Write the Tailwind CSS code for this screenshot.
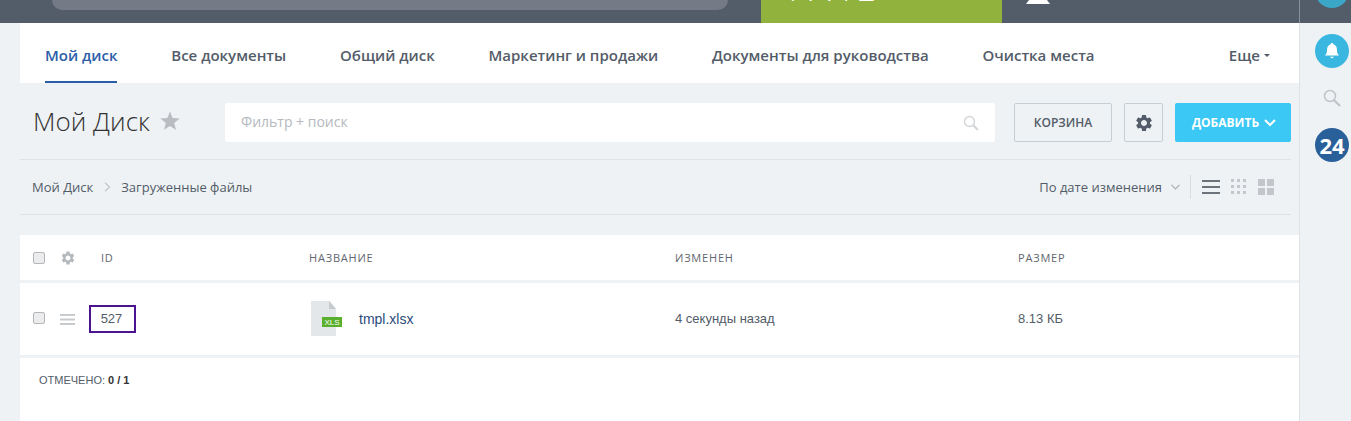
<!DOCTYPE html>
<html lang="en">
<head>
  <meta charset="UTF-8" />
  <title>Мой Диск</title>
  <script src="https://cdn.jsdelivr.net/npm/@tailwindcss/browser@4"></script>
</head>
<body class="h-[421px] overflow-hidden bg-[#eef2f4] font-['Open_Sans',sans-serif] text-[#535c69]">

  <!-- Top bar -->
  <header class="flex h-[23px] overflow-hidden bg-[#535c69]">
    <div class="ml-[52px] h-[10px] w-[676px] rounded-b-[12px] bg-[#747b86]"></div>
    <div class="ml-[33px] h-[23px] w-[241px] overflow-hidden bg-[#91b33d] pl-[22px]">
      <div class="-mt-[29px] text-[32px] leading-[36px] font-light tracking-[3px] text-white">17:12</div>
    </div>
    <svg class="ml-[24px]" width="24" height="5" viewBox="0 0 24 5"><path d="M3 0h18l3 4H0z" fill="#fff"/></svg>
    <div class="ml-[249px] h-[23px] w-[52px] border-l border-[#8a919b]">
      <div class="-mt-[9px] ml-[15px] h-[34px] w-[34px] -translate-y-[17px] rounded-full bg-[#3aa7c9]"></div>
    </div>
  </header>

  <div class="flex h-[398px]">
    <main class="w-[1299px] pl-[20px]">

      <!-- Tabs -->
      <nav class="flex h-[60px] items-center justify-between bg-white pt-[4px] pr-[29px] pl-[25px] text-[15px] font-semibold">
        <div class="flex h-full items-center gap-[53.8px]">
          <a class="flex h-full items-center border-b-2 border-[#2a5ea8] pt-[2px] text-[#2a5ea8]">Мой диск</a>
          <a>Все документы</a>
          <a>Общий диск</a>
          <a>Маркетинг и продажи</a>
          <a>Документы для руководства</a>
          <a>Очистка места</a>
        </div>
        <a class="flex items-center gap-[4px]">Еще <span class="mt-[1px] h-0 w-0 border-x-[3px] border-t-[3px] border-x-transparent border-t-[#535c69]"></span></a>
      </nav>

      <!-- Title, filter, buttons -->
      <div class="mr-[8px] flex h-[77px] items-start border-b border-[#dde2e5] pt-[20px] pl-[13px]">
        <h1 class="w-[127px] text-[26px] leading-[36px] font-light text-[#333]">Мой Диск</h1>
        <svg class="mt-[8px]" width="20" height="20" viewBox="0 0 20 20"><path d="M10 0.5l2.6 6.6 7.1.4-5.5 4.5 1.8 6.9L10 14.9l-6 3.9 1.8-6.9L.3 7.5l7.1-.4z" fill="#b9bdc2"/></svg>
        <div class="ml-[45px] flex h-[39px] w-[770px] items-center justify-between rounded-[2px] bg-white pr-[16px] pl-[16px] text-[14px] text-[#b5b9be]">
          <span class="-mt-[2px]">Фильтр + поиск</span>
          <svg width="16" height="16" viewBox="0 0 16 16" fill="none" stroke="#d3d6d9" stroke-width="1.4"><circle cx="6.5" cy="6.5" r="5"/><path d="M10.2 10.2L15 15" stroke-width="2"/></svg>
        </div>
        <button class="ml-[19px] h-[39px] w-[98px] rounded-[2px] border border-[#c6cdd3] text-[12px] font-semibold">КОРЗИНА</button>
        <button class="ml-[12px] flex h-[39px] w-[39px] items-center justify-center rounded-[2px] border border-[#c6cdd3]">
          <svg width="20" height="20" viewBox="0 0 24 24" fill="#535c69"><path d="M19.14 12.94c.04-.3.06-.61.06-.94 0-.32-.02-.64-.07-.94l2.03-1.58a.49.49 0 0 0 .12-.61l-1.92-3.32a.488.488 0 0 0-.59-.22l-2.39.96c-.5-.38-1.03-.7-1.62-.94l-.36-2.54a.484.484 0 0 0-.48-.41h-3.84c-.24 0-.43.17-.47.41l-.36 2.54c-.59.24-1.13.57-1.62.94l-2.39-.96c-.22-.08-.47 0-.59.22L2.74 8.87c-.12.21-.08.47.12.61l2.03 1.58c-.05.3-.09.63-.09.94s.02.64.07.94l-2.03 1.58a.49.49 0 0 0-.12.61l1.92 3.32c.12.22.37.29.59.22l2.39-.96c.5.38 1.03.7 1.62.94l.36 2.54c.05.24.24.41.48.41h3.84c.24 0 .44-.17.47-.41l.36-2.54c.59-.24 1.13-.56 1.62-.94l2.39.96c.22.08.47 0 .59-.22l1.92-3.32c.12-.22.07-.47-.12-.61l-2.01-1.58zM12 15.6c-1.98 0-3.6-1.62-3.6-3.6s1.62-3.6 3.6-3.6 3.6 1.62 3.6 3.6-1.62 3.6-3.6 3.6z"/></svg>
        </button>
        <button class="ml-[12px] flex h-[39px] w-[116px] items-center justify-center gap-[5px] rounded-[2px] bg-[#3bc8f5] pl-[2px] text-[12px] font-bold text-white">
          ДОБАВИТЬ
          <svg width="12" height="8" viewBox="0 0 12 8" fill="none" stroke="#fff" stroke-width="2"><path d="M1 1l5 5 5-5"/></svg>
        </button>
      </div>

      <!-- Breadcrumbs and sort -->
      <div class="mr-[8px] flex h-[55px] items-center justify-between border-b border-[#dde2e5] pr-[17px] pl-[12px] text-[13px]">
        <div class="flex items-center">
          <span class="pt-[1px]">Мой Диск</span>
          <svg class="mr-[10px] ml-[11px]" width="7" height="10" viewBox="0 0 7 10" fill="none" stroke="#c4c8cc" stroke-width="1.3"><path d="M1 .8L5.5 5 1 9.2"/></svg>
          <span class="pt-[1px]">Загруженные файлы</span>
        </div>
        <div class="flex items-center">
          <span class="pt-[1px]">По дате изменения</span>
          <svg class="ml-[9px]" width="9" height="6" viewBox="0 0 9 6" fill="none" stroke="#a9aeb3" stroke-width="1.2"><path d="M.5.8l4 4 4-4"/></svg>
          <div class="mr-[11px] ml-[10px] h-[24px] w-px bg-[#d8dde0]"></div>
          <svg width="18" height="14" viewBox="0 0 18 14" fill="#6d737b"><path d="M0 0h18v2H0zM0 6h18v2H0zM0 12h18v2H0z"/></svg>
          <svg class="ml-[11px]" width="16" height="16" viewBox="0 0 16 16" fill="#c3c7cb"><path d="M0 0h3v3H0zM6 0h3v3H6zM12 0h3v3h-3zM0 6h3v3H0zM6 6h3v3H6zM12 6h3v3h-3zM0 12h3v3H0zM6 12h3v3H6zM12 12h3v3h-3z"/></svg>
          <svg class="ml-[11px]" width="16" height="16" viewBox="0 0 16 16" fill="#c3c7cb"><path d="M0 0h7v7H0zM9 0h7v7H9zM0 9h7v7H0zM9 9h7v7H9z"/></svg>
        </div>
      </div>

      <!-- Table -->
      <section class="mt-[20px] h-[186px] bg-white">
        <div class="grid h-[48px] grid-cols-[27px_41px_208px_366px_343px_1fr] items-center border-b-[3px] border-[#eef2f4] pl-[13px] text-[11px] tracking-[0.8px] text-[#5f666f]">
          <span class="h-[12px] w-[12px] rounded-[2px] border border-[#b4b8bc] bg-[#ececec]"></span>
          <svg width="16" height="16" viewBox="0 0 24 24" fill="#b4b9be"><path d="M19.14 12.94c.04-.3.06-.61.06-.94 0-.32-.02-.64-.07-.94l2.03-1.58a.49.49 0 0 0 .12-.61l-1.92-3.32a.488.488 0 0 0-.59-.22l-2.39.96c-.5-.38-1.03-.7-1.62-.94l-.36-2.54a.484.484 0 0 0-.48-.41h-3.84c-.24 0-.43.17-.47.41l-.36 2.54c-.59.24-1.13.57-1.62.94l-2.39-.96c-.22-.08-.47 0-.59.22L2.74 8.87c-.12.21-.08.47.12.61l2.03 1.58c-.05.3-.09.63-.09.94s.02.64.07.94l-2.03 1.58a.49.49 0 0 0-.12.61l1.92 3.32c.12.22.37.29.59.22l2.39-.96c.5.38 1.03.7 1.62.94l.36 2.54c.05.24.24.41.48.41h3.84c.24 0 .44-.17.47-.41l.36-2.54c.59-.24 1.13-.56 1.62-.94l2.39.96c.22.08.47 0 .59-.22l1.92-3.32c.12-.22.07-.47-.12-.61l-2.01-1.58zM12 15.6c-1.98 0-3.6-1.62-3.6-3.6s1.62-3.6 3.6-3.6 3.6 1.62 3.6 3.6-1.62 3.6-3.6 3.6z"/></svg>
          <span class="pt-[1px]">ID</span>
          <span class="pt-[1px]">НАЗВАНИЕ</span>
          <span class="pt-[1px]">ИЗМЕНЕН</span>
          <span class="pt-[1px]">РАЗМЕР</span>
        </div>
        <div class="grid h-[75px] grid-cols-[27px_29px_220px_366px_343px_1fr] items-center border-b-[3px] border-[#eef2f4] pl-[13px] font-['Liberation_Sans',sans-serif] text-[13px]">
          <span class="mb-[2px] h-[12px] w-[12px] rounded-[2px] border border-[#b4b8bc] bg-[#ececec]"></span>
          <svg width="15" height="11" viewBox="0 0 15 11" fill="#c8cbce"><path d="M0 0h15v2H0zM0 4.500h15v2H0zM0 9h15v2H0z"/></svg>
          <span class="flex h-[28px] w-[47px] items-center justify-center border-2 border-[#4b1390] pr-[2px]">527</span>
          <div class="flex items-center">
            <svg class="mr-[17px]" width="33" height="36" viewBox="0 0 33 36"><path d="M2 0h19l6 8v27H2z" fill="#e3e7ea"/><path d="M20 0l7 8h-7z" fill="#c6cbcf"/><path d="M13 16h20v10H13z" fill="#5ab02c"/><text x="23" y="24" text-anchor="middle" font-family="Liberation Sans" font-size="8" fill="#fff">XLS</text></svg>
            <span class="text-[14px] text-[#2a4b7c]">tmpl.xlsx</span>
          </div>
          <span>4 секунды назад</span>
          <span>8.13 КБ</span>
        </div>
        <div class="pt-[14px] pl-[19px] font-['Liberation_Sans',sans-serif] text-[11px]">ОТМЕЧЕНО: <b class="text-[#333]">0 / 1</b></div>
      </section>
    </main>

    <!-- Right sidebar -->
    <aside class="flex w-[52px] flex-col items-center border-l border-[#dde2e5] pt-[11px] pl-[13px]">
      <div class="flex h-[34px] w-[34px] shrink-0 items-center justify-center rounded-full bg-[#3ab7e0]">
        <svg width="16" height="18" viewBox="0 0 18 20" fill="#fff"><path d="M9 1c.9 0 1.500.6 1.500 1.400C13 3 14.500 5 14.500 8c0 4 1 5.500 2.500 7H1c1.500-1.500 2.500-3 2.500-7 0-3 1.500-5 4-5.600C7.500 1.600 8.100 1 9 1z"/><path d="M6.500 16.500h5L9 18.500z"/></svg>
      </div>
      <svg class="mt-[21px] shrink-0" width="18" height="18" viewBox="0 0 18 18" fill="none" stroke="#c0c4c8" stroke-width="1.5"><circle cx="7" cy="7" r="5.500"/><path d="M11 11l6 6" stroke-width="2.200"/></svg>
      <div class="mt-[21px] flex h-[34px] w-[34px] shrink-0 items-center justify-center rounded-full bg-[#2a6099] text-[22px] font-bold text-white">24</div>
    </aside>
  </div>
</body>
</html>
